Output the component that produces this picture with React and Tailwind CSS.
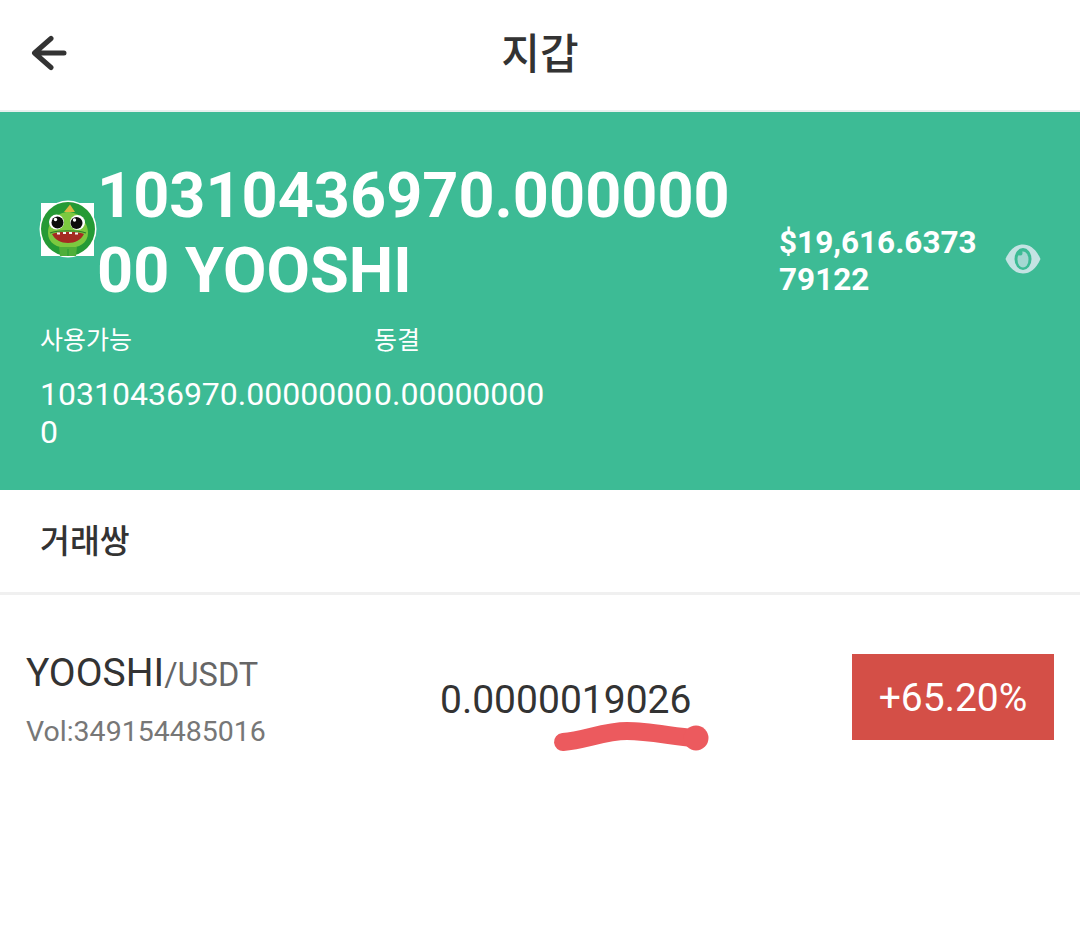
const FONT = { fontFamily: 'Roboto, "Noto Sans CJK KR", sans-serif' }

function Logo() {
  return (
    <svg width="60" height="60" viewBox="0 0 60 60" className="shrink-0 -ml-[2px] mb-[6px]">
      <rect x="3" y="3" width="53" height="53" fill="#fff" />
      <circle cx="30" cy="29" r="28.5" fill="#fff" />
      <circle cx="30" cy="29" r="27" fill="#259a35" />
      <path d="M10 33 C10 26 13 22 16 19 C20 14 25 12 30 12 C35 12 41 14 44 19 C47 22 50 26 50 33 C50 43 41 48 30 48 C19 48 10 43 10 33 Z" fill="#7cc93f" />
      <path d="M26 12 L32 4.5 L37 12 Z" fill="#d9b83f" />
      <path d="M21 47 H39 L38 56 H22 Z" fill="#4fae39" />
      <path d="M30 49 V56" stroke="#259a35" strokeWidth="1" />
      <circle cx="18.5" cy="22" r="7.5" fill="#fff" />
      <circle cx="39.5" cy="22.5" r="7.5" fill="#fff" />
      <circle cx="19.5" cy="22.5" r="6" fill="#0c0c0c" />
      <circle cx="38.5" cy="23" r="6" fill="#0c0c0c" />
      <circle cx="17.5" cy="19.5" r="1.7" fill="#fff" />
      <circle cx="36.5" cy="20" r="1.7" fill="#fff" />
      <path d="M14 34 C21 31 39 31 46 34 C43 40 37 43 30 43 C23 43 17 40 14 34 Z" fill="#a52a22" />
      <path d="M12 33 C20 30 40 30 48 33" fill="none" stroke="#2d7a2a" strokeWidth="1.2" />
      <path d="M19 32.5 h3 v2 h-3 Z M25 32 h3 v2 h-3 Z M31 32 h3 v2 h-3 Z M37 32.5 h3 v2 h-3 Z" fill="#f4f4f4" />
    </svg>
  )
}

function Eye() {
  return (
    <svg width="36" height="30" viewBox="0 0 36 30" className="shrink-0">
      <path d="M0.5 15 C5 5 11 0.5 18 0.5 C25 0.5 31 5 35.5 15 C31 25 25 29.5 18 29.5 C11 29.5 5 25 0.5 15 Z" fill="#c4e3e3" />
      <ellipse cx="18" cy="15" rx="8.5" ry="11" fill="#3dbb95" />
      <ellipse cx="18" cy="15.5" rx="5.5" ry="8" fill="#a5d8d2" />
      <circle cx="15" cy="9" r="2.5" fill="#3dbb95" />
    </svg>
  )
}

function BackArrow() {
  return (
    <svg width="36" height="36" viewBox="0 0 36 36" fill="none" stroke="#333" strokeWidth="5" strokeLinecap="round" strokeLinejoin="round" className="shrink-0 -mt-[4px]">
      <path d="M33 18 H5 M20 3.5 L3.5 18 L20 32.5" />
    </svg>
  )
}

export default function App() {
  return (
    <div className="w-[1080px] h-[944px] bg-white overflow-hidden" style={FONT}>
      <header className="h-[112px] flex items-center px-[31px] border-b-2 border-[#e8f0ee]">
        <BackArrow />
        <h1 className="flex-1 text-center text-[42px] font-medium text-[#333] pr-[36px] -mt-[2px]">지갑</h1>
      </header>

      <section className="h-[378px] bg-[#3dbb95] text-white pl-10 pr-[39px] pt-[46px]">
        <div className="flex items-center">
          <Logo />
          <div className="w-[640px] -ml-[1px] text-[63px] leading-[75px] font-bold break-all shrink-0">
            10310436970.00000000 YOOSHI
          </div>
          <div className="w-[250px] pl-[42px] text-[31.5px] leading-[37px] font-bold break-all shrink-0 mt-[56px]">
            $19,616.637379122
          </div>
          <div className="ml-auto mt-[52px]"><Eye /></div>
        </div>

        <div className="flex mt-[14px] text-[25px]">
          <div className="w-[334px]">
            <div className="leading-[38px]">사용가능</div>
            <div className="mt-[15px] text-[32px] leading-[38px] break-all">10310436970.00000000</div>
          </div>
          <div>
            <div className="leading-[38px]">동결</div>
            <div className="mt-[15px] text-[32px] leading-[38px]">0.00000000</div>
          </div>
        </div>
      </section>

      <div className="h-[105px] flex items-center pl-10 pt-[3px] border-b-[3px] border-[#f0f0f0] text-[32.5px] font-medium text-[#333]">
        거래쌍
      </div>

      <div className="flex items-center h-[200px] px-[26px] pt-[4px]">
        <div className="w-[414px] mt-[7px]">
          <div className="leading-[44px] text-[#333]">
            <span className="text-[39px]">YOOSHI</span>
            <span className="text-[32.5px] text-[#666]">/USDT</span>
          </div>
          <div className="mt-[11px] text-[28.5px] leading-[36px] text-[#777]">Vol:349154485016</div>
        </div>
        <div className="relative text-[39px] text-[#333] leading-[44px] mt-[5px]">
          0.0000019026
          <svg width="160" height="38" viewBox="0 0 160 38" className="absolute left-[110px] top-[39px]">
            <path d="M13 25 C35 23 55 14 77 14 C100 14 125 20 145 21" fill="none" stroke="#ec5a5e" strokeWidth="18" strokeLinecap="round" />
            <circle cx="146" cy="21" r="12.5" fill="#ec5a5e" />
          </svg>
        </div>
        <div className="ml-auto w-[202px] h-[86px] pt-[3px] bg-[#d44f47] text-white text-[39px] flex items-center justify-center">
          +65.20%
        </div>
      </div>
    </div>
  )
}
